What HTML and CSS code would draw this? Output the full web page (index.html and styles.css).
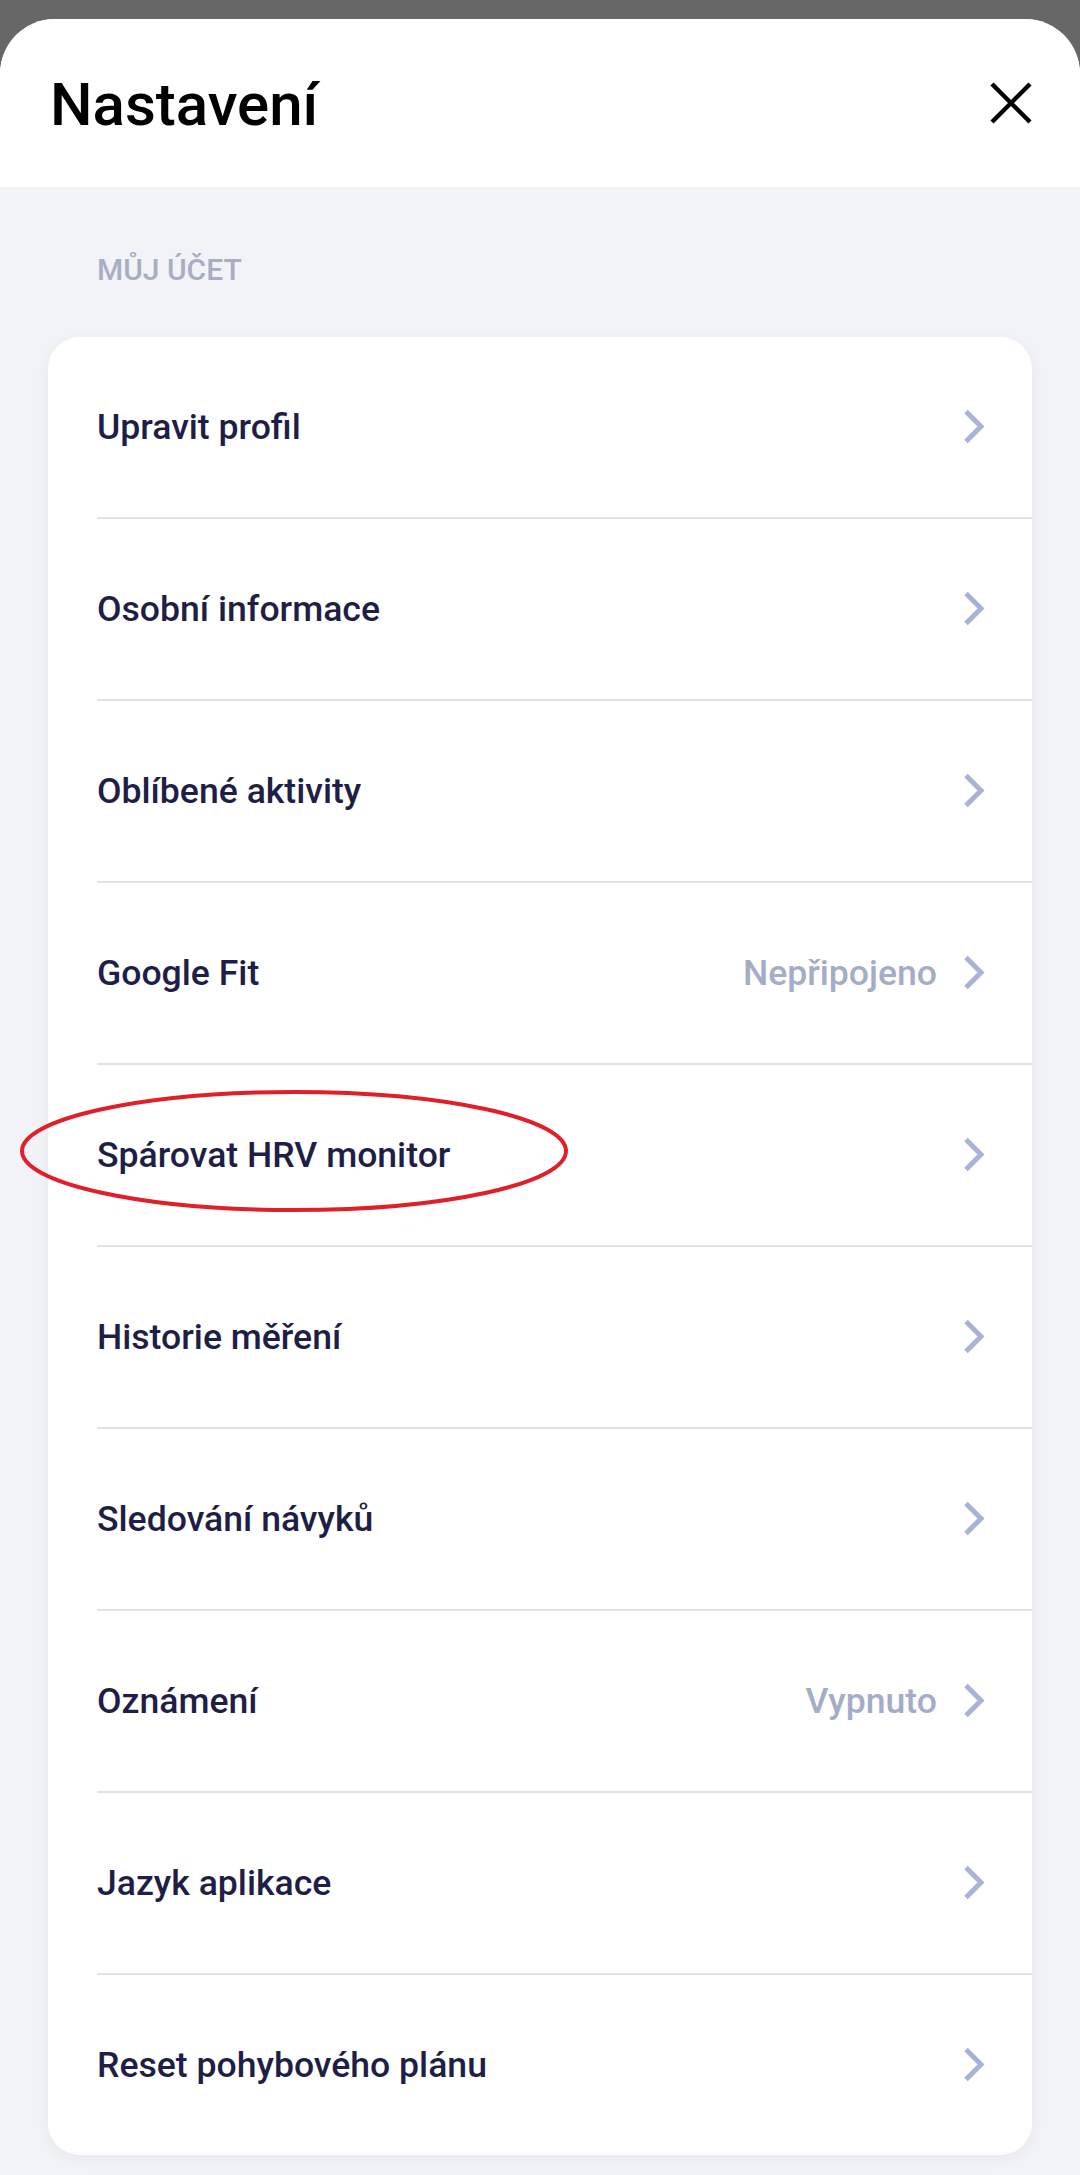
FILE: index.html
```html
<!DOCTYPE html>
<html lang="cs">
<head>
<meta charset="utf-8">
<title>Nastavení</title>
<link rel="stylesheet" href="styles.css">
</head>
<body>
<div class="sheet">
  <header class="header">
    <h1 class="title">Nastavení</h1>
    <svg class="close" width="42" height="42" viewBox="0 0 42 42"><path d="M2 2 L40 40 M40 2 L2 40" stroke="#000" stroke-width="4.4" fill="none"/></svg>
  </header>
  <main class="content">
    <div class="section-label">MŮJ ÚČET</div>
    <div class="card">
      <div class="row"><span class="label">Upravit profil</span><span class="chev"><svg width="24" height="40" viewBox="0 0 24 40"><path d="M4 4.5 L19 19.5 L4 34.5" stroke="#a9b3d6" stroke-width="5" fill="none"/></svg></span></div>
      <div class="row"><span class="label">Osobní informace</span><span class="chev"><svg width="24" height="40" viewBox="0 0 24 40"><path d="M4 4.5 L19 19.5 L4 34.5" stroke="#a9b3d6" stroke-width="5" fill="none"/></svg></span></div>
      <div class="row"><span class="label">Oblíbené aktivity</span><span class="chev"><svg width="24" height="40" viewBox="0 0 24 40"><path d="M4 4.5 L19 19.5 L4 34.5" stroke="#a9b3d6" stroke-width="5" fill="none"/></svg></span></div>
      <div class="row"><span class="label">Google Fit</span><span class="value">Nepřipojeno</span><span class="chev"><svg width="24" height="40" viewBox="0 0 24 40"><path d="M4 4.5 L19 19.5 L4 34.5" stroke="#a9b3d6" stroke-width="5" fill="none"/></svg></span></div>
      <div class="row"><span class="label">Spárovat HRV monitor</span><span class="chev"><svg width="24" height="40" viewBox="0 0 24 40"><path d="M4 4.5 L19 19.5 L4 34.5" stroke="#a9b3d6" stroke-width="5" fill="none"/></svg></span></div>
      <div class="row"><span class="label">Historie měření</span><span class="chev"><svg width="24" height="40" viewBox="0 0 24 40"><path d="M4 4.5 L19 19.5 L4 34.5" stroke="#a9b3d6" stroke-width="5" fill="none"/></svg></span></div>
      <div class="row"><span class="label">Sledování návyků</span><span class="chev"><svg width="24" height="40" viewBox="0 0 24 40"><path d="M4 4.5 L19 19.5 L4 34.5" stroke="#a9b3d6" stroke-width="5" fill="none"/></svg></span></div>
      <div class="row"><span class="label">Oznámení</span><span class="value">Vypnuto</span><span class="chev"><svg width="24" height="40" viewBox="0 0 24 40"><path d="M4 4.5 L19 19.5 L4 34.5" stroke="#a9b3d6" stroke-width="5" fill="none"/></svg></span></div>
      <div class="row"><span class="label">Jazyk aplikace</span><span class="chev"><svg width="24" height="40" viewBox="0 0 24 40"><path d="M4 4.5 L19 19.5 L4 34.5" stroke="#a9b3d6" stroke-width="5" fill="none"/></svg></span></div>
      <div class="row"><span class="label">Reset pohybového plánu</span><span class="chev"><svg width="24" height="40" viewBox="0 0 24 40"><path d="M4 4.5 L19 19.5 L4 34.5" stroke="#a9b3d6" stroke-width="5" fill="none"/></svg></span></div>
    </div>
  </main>
</div>
<svg class="annotation" width="552" height="126" viewBox="0 0 552 126"><ellipse cx="276" cy="63" rx="272" ry="59" fill="none" stroke="#e11f2a" stroke-width="4"/></svg>
</body>
</html>
```
FILE: styles.css
```css
html, body {
  margin: 0;
  padding: 0;
}
body {
  background: #676767;
  font-family: Roboto, "Noto Sans", "Liberation Sans", sans-serif;
  position: relative;
  height: 2175px;
  overflow: hidden;
}
.sheet {
  margin-top: 19px;
  background: #f2f3f7;
  border-radius: 55px 55px 0 0;
  overflow: hidden;
  height: 2156px;
}
.header {
  background: #fff;
  height: 168px;
  box-sizing: border-box;
  display: flex;
  justify-content: space-between;
  align-items: flex-start;
  padding: 0 48px 0 50px;
}
.title {
  margin: 51px 0 0 0;
  font-size: 60px;
  line-height: 70px;
  font-weight: 500;
  color: #000;
}
.close {
  margin-top: 63px;
  display: block;
}
.content {
  padding: 66px 48px 0 48px;
}
.section-label {
  margin-left: 49px;
  font-size: 30px;
  line-height: 34px;
  font-weight: 500;
  color: #a7aec4;
}
.card {
  margin-top: 50px;
  background: #fff;
  border-radius: 32px;
  box-shadow: 0 4px 14px rgba(30, 35, 70, 0.05);
  overflow: hidden;
}
.row {
  height: 180px;
  margin-left: 49px;
  padding-right: 46px;
  display: flex;
  align-items: center;
  border-bottom: 2px solid #e0e1e5;
}
.row:last-child {
  border-bottom: none;
}
.label {
  font-size: 35.6px;
  font-weight: 500;
  color: #1e1e46;
}
.value {
  margin-left: auto;
  margin-right: 25px;
  font-size: 35.6px;
  font-weight: 500;
  color: #a4acc7;
}
.chev {
  margin-left: auto;
  display: flex;
}
.value + .chev {
  margin-left: 0;
}
.chev svg {
  display: block;
}
.annotation {
  position: absolute;
  left: 18px;
  top: 1088px;
}
```
